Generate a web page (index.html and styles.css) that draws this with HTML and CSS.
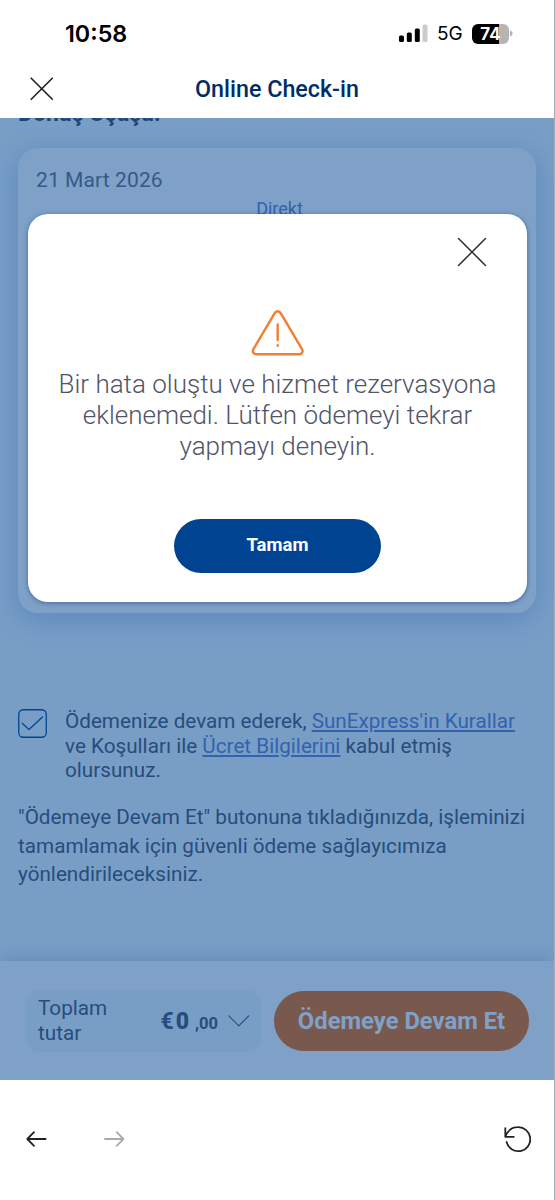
FILE: index.html
```
<!DOCTYPE html>
<html lang="tr">
	<head>
		<meta charset="UTF-8">
		<meta name="viewport" content="width=device-width, initial-scale=1.0">
		<title>Online Check-in</title>
		<link rel="stylesheet" href="styles.css">
	</head>
	<body>
		<div class="status-bar">
			<span class="time">10:58</span>
			<div class="status-icons">
				<svg class="signal" width="30" height="19" viewBox="0 0 30 19">
					<rect x="0" y="11.5" width="5" height="6.5" rx="1.5"/>
					<rect x="7.8" y="8.5" width="5" height="9.5" rx="1.5"/>
					<rect x="15.8" y="4.5" width="5" height="13.5" rx="1.5"/>
					<rect x="23.5" y="0.5" width="5" height="17.5" rx="1.5" fill="#cccccc"/>
				</svg>
				<span class="network">5G</span>
				<div class="battery"><span>74</span></div>
				<svg class="battery-cap" width="3" height="7" viewBox="0 0 3 7"><path d="M0 0.5C3.4 1.2 3.4 5.8 0 6.5Z" fill="#b5b5b5"/></svg>
			</div>
		</div>

		<header class="header">
			<svg class="close-page" width="24" height="24" viewBox="0 0 24 24"><path d="M1.2 1.2 22.3 22.3M22.3 1.2 1.2 22.3"/></svg>
			<h1>Online Check-in</h1>
		</header>

		<main class="view">
			<h2 class="flight-title">Dönüş Uçuşu:</h2>
			<section class="flight-card">
				<div class="flight-date">21 Mart 2026</div>
				<div class="direct">Direkt</div>
				<div class="airports">
					<span>DUS</span>
					<span>ADB</span>
				</div>
			</section>

			<div class="terms">
				<svg class="checkbox" width="29" height="29" viewBox="0 0 29 29">
					<rect x="0.75" y="0.75" width="27.5" height="27.5" rx="4.5"/>
					<path d="M4.2 14.2 11 20.6 24.5 8"/>
				</svg>
				<p>Ödemenize devam ederek, <a href="#">SunExpress'in Kurallar</a><br>ve Koşulları ile <a href="#">Ücret Bilgilerini</a> kabul etmiş<br>olursunuz.</p>
			</div>
			<p class="payment-note">"Ödemeye Devam Et" butonuna tıkladığınızda, işleminizi<br>tamamlamak için güvenli ödeme sağlayıcımıza<br>yönlendirileceksiniz.</p>

			<div class="pay-bar">
				<div class="total">
					<span class="total-label">Toplam<br>tutar</span>
					<span class="price">€<b>0</b><small>,00</small></span>
					<svg class="chevron" width="22" height="12" viewBox="0 0 22 12"><path d="M0.8 0.8 10.8 10.8 20.8 0.8"/></svg>
				</div>
				<button class="pay-btn">Ödemeye Devam Et</button>
			</div>

			<div class="backdrop">
				<div class="modal" role="dialog">
					<svg class="close-modal" width="30" height="30" viewBox="0 0 30 30"><path d="M1.5 1.5 28.5 28.5M28.5 1.5 1.5 28.5"/></svg>
					<svg class="warning" width="54" height="48" viewBox="0 0 54 48">
						<path d="M23.4 4.6 2.4 40.2C0.9 42.8 2.6 45.3 5.2 45.3H48.2C50.9 45.3 52.5 42.8 51 40.2L30 4.6C28.3 1.5 25.1 1.5 23.4 4.6Z"/>
						<path d="M26.7 15.5V31M26.7 36.2V36.8"/>
					</svg>
					<p class="message">Bir hata oluştu ve hizmet rezervasyona eklenemedi. Lütfen ödemeyi tekrar yapmayı deneyin.</p>
					<button class="ok-btn">Tamam</button>
				</div>
			</div>
		</main>

		<nav class="browser-bar">
			<svg width="22" height="18" viewBox="0 0 22 18"><path d="M19.6 9H1.5M8 2.2 1.3 9 8 15.8"/></svg>
			<svg class="disabled" width="22" height="18" viewBox="0 0 22 18"><path d="M1 9H19.4M12.7 2.2 19.4 9 12.7 15.8"/></svg>
			<svg class="reload" width="28" height="28" viewBox="0 0 28 28"><path d="M2.3 3.2V11.8H10.8M2.3 11.6C5 5 9 2.2 14.8 2.2A12 12 0 1 1 3.6 17"/></svg>
		</nav>
	</body>
</html>
```
FILE: styles.css
```
:root {
    --navy: #002d66;
    --blue: #004491;
    --orange: #f26c09;
    --text: #505467;
    --link: #6880c9;
    --page-bg: #f1f9fb;
}

* {
    box-sizing: border-box;
    margin: 0;
    padding: 0;
}

body {
    font-family: Roboto, sans-serif;
    color: var(--text);
    background: #fff;
    height: 1200px;
    display: flex;
    flex-direction: column;
    overflow: hidden;
    border-right: 1px solid #a9adb3;
}

svg {
    fill: none;
    stroke-linecap: round;
    stroke-linejoin: round;
    flex: none;
}

button {
    font-family: inherit;
    border: none;
    color: #fff;
    font-weight: 700;
}

/* Phone status bar */
.status-bar {
    height: 62px;
    padding: 5px 41px 0 65px;
    display: flex;
    align-items: center;
    justify-content: space-between;
    font-family: Inter, sans-serif;
    color: #000;
}

.time {
    font-size: 23.3px;
    font-weight: 600;
}

.status-icons {
    display: flex;
    align-items: center;
}

.signal {
    fill: #000;
}

.network {
    font-size: 19px;
    margin-left: 8px;
    width: 35px;
}

.battery {
    width: 37px;
    height: 20px;
    border-radius: 6px;
    background: linear-gradient(90deg, #000 74%, #b5b5b5 74%);
    color: #fff;
    font-size: 17px;
    font-weight: 700;
    line-height: 20px;
    text-align: center;
}

.battery-cap {
    margin-left: 1px;
}

/* Header */
.header {
    height: 56px;
    padding: 0 28px 2px 30px;
    display: grid;
    grid-template-columns: 24px 1fr 24px;
    align-items: center;
}

.header h1 {
    font-size: 23.3px;
    font-weight: 500;
    text-align: center;
    margin-right: 2px;
    color: var(--navy);
}

.close-page {
    stroke: #222;
    stroke-width: 1.6;
}

/* Page content */
.view {
    height: 962px;
    position: relative;
    overflow: hidden;
    background: var(--page-bg);
    display: flex;
    flex-direction: column;
}

.flight-title {
    font-size: 23px;
    line-height: 26px;
    margin: -17px 0 21px 18px;
    color: #3a4860;
}

.flight-card {
    height: 465px;
    margin: 0 18px 0 18px;
    padding: 20px 18px;
    border-radius: 20px;
    background: #fff;
    box-shadow: 0 6px 30px rgba(0, 60, 170, 0.26);
}

.flight-date {
    font-size: 21px;
    line-height: 25px;
    letter-spacing: 0.1px;
    color: #6a6e80;
}

.direct {
    margin: 6px 0 0 5px;
    font-size: 18px;
    line-height: 20px;
    text-align: center;
    color: var(--link);
}

.airports {
    display: flex;
    justify-content: space-between;
    padding: 0 87px 0 81px;
    margin-top: -10px;
    font-size: 32px;
    font-weight: 700;
}

.terms {
    display: flex;
    gap: 18px;
    margin: 96px 18px 0;
    font-size: 20.7px;
    line-height: 24.7px;
    white-space: nowrap;
}

.terms a {
    color: var(--link);
}

.checkbox {
    stroke: var(--blue);
    stroke-width: 1.3;
}

.payment-note {
    margin: 20px 18px 0;
    font-size: 20.7px;
    line-height: 28.6px;
    white-space: nowrap;
}

.pay-bar {
    height: 119px;
    margin-top: auto;
    padding: 1px 25px 0 26px;
    display: flex;
    align-items: center;
    justify-content: space-between;
    background: #fff;
    box-shadow: 0 -2px 18px rgba(0, 40, 110, 0.2);
}

.total {
    width: 235px;
    height: 62px;
    padding: 0 11px 0 12px;
    display: flex;
    align-items: center;
    border-radius: 14px;
    background: var(--page-bg);
}

.total-label {
    font-size: 20.7px;
    line-height: 25px;
}

.price {
    margin-left: auto;
    margin-right: 10px;
    font-size: 23px;
    font-weight: 700;
}

.price b {
    margin: 0 6px 0 2px;
}

.price small {
    font-size: 16.5px;
}

.chevron {
    stroke: var(--text);
    stroke-width: 1.1;
}

.pay-btn {
    width: 255px;
    height: 60px;
    border-radius: 30px;
    font-size: 23.8px;
    background: var(--orange);
}

/* Error dialog */
.backdrop {
    position: absolute;
    inset: 0;
    padding: 96px 27px 0 28px;
    background: rgba(0, 68, 145, 0.5);
}

.modal {
    height: 388px;
    padding: 23px 30px 29px;
    display: flex;
    flex-direction: column;
    align-items: center;
    border-radius: 20px;
    background: #fff;
    box-shadow: 0 1px 5px rgba(0, 50, 120, 0.5);
}

.close-modal {
    align-self: flex-end;
    margin-right: 10px;
    stroke: #333;
    stroke-width: 1.5;
}

.warning {
    margin-top: 42px;
    stroke: #f08030;
    stroke-width: 2.4;
}

.message {
    margin-top: 12px;
    font-size: 26px;
    font-weight: 300;
    line-height: 31px;
    text-align: center;
}

.ok-btn {
    width: 207px;
    height: 54px;
    margin-top: auto;
    padding-bottom: 2px;
    border-radius: 27px;
    font-size: 18.5px;
    background: var(--blue);
}

/* Browser toolbar */
.browser-bar {
    flex: 1;
    padding: 0 23px 3px 26px;
    display: flex;
    align-items: center;
    gap: 56px;
    stroke: #222;
    stroke-width: 1.8;
}

.browser-bar .disabled {
    stroke: #aaa;
}

.browser-bar .reload {
    margin-left: auto;
}
```
